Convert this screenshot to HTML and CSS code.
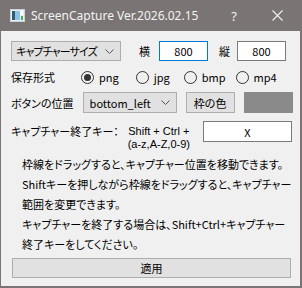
FILE: index.html
```html
<html lang="ja">
  <head>
    <meta charset="UTF-8" />
    <title>ScreenCapture</title>
    <link rel="stylesheet" href="styles.css">
  </head>
  <body>
    <div class="window">
      <div class="titlebar">
        <svg class="app-icon" width="15" height="13" viewBox="0 0 15 13">
          <rect x="0.5" y="0.5" width="14" height="12" fill="#e9f1f6" stroke="#c8d4dc" />
          <rect x="2" y="2" width="3" height="9" fill="#2f5e6e" />
          <rect x="5" y="2" width="5" height="9" fill="#8fc3e6" />
          <rect x="10" y="2" width="3" height="4" fill="#ffffff" />
          <rect x="11" y="7" width="2" height="4" fill="#4caf50" />
        </svg>
        <span class="title">ScreenCapture Ver.2026.02.15</span>
        <span class="help">?</span>
        <svg class="close" width="11" height="11" viewBox="0 0 11 11">
          <path d="M0.5 0.5 L10.5 10.5 M10.5 0.5 L0.5 10.5" stroke="#f2f2f2" stroke-width="1.1" />
        </svg>
      </div>

      <div class="content">
        <div class="row row-size">
          <div class="combo combo-size">
            <span class="combo-text">キャプチャーサイズ</span>
            <svg width="9" height="5" viewBox="0 0 9 5"><path d="M0.5 0.5 L4.5 4.5 L8.5 0.5" fill="none" stroke="#555" /></svg>
          </div>
          <span class="label label-w">横</span>
          <div class="field field-focus">800</div>
          <span class="label label-h">縦</span>
          <div class="field">800</div>
        </div>

        <div class="row row-format">
          <span class="label">保存形式</span>
          <label class="radio radio-png"><span class="dot checked"></span>png</label>
          <label class="radio radio-jpg"><span class="dot"></span>jpg</label>
          <label class="radio radio-bmp"><span class="dot"></span>bmp</label>
          <label class="radio radio-mp4"><span class="dot"></span>mp4</label>
        </div>

        <div class="row row-pos">
          <span class="label">ボタンの位置</span>
          <div class="combo combo-pos">
            <span>bottom_left</span>
            <svg width="9" height="5" viewBox="0 0 9 5"><path d="M0.5 0.5 L4.5 4.5 L8.5 0.5" fill="none" stroke="#555" /></svg>
          </div>
          <div class="btn btn-color">枠の色</div>
          <div class="swatch"></div>
        </div>

        <div class="row row-key">
          <span class="label">キャプチャー終了キー：</span>
          <div class="key-hint">
            <div>Shift + Ctrl +</div>
            <div>(a-z,A-Z,0-9)</div>
          </div>
          <div class="field field-key">X</div>
        </div>

        <div class="help-text">
          <div class="line">枠線をドラッグすると、キャプチャー位置を移動できます。</div>
          <div class="line">Shiftキーを押しながら枠線をドラッグすると、キャプチャー</div>
          <div class="line">範囲を変更できます。</div>
          <div class="line">キャプチャーを終了する場合は、Shift+Ctrl+キャプチャー</div>
          <div class="line">終了キーをしてください。</div>
        </div>

        <div class="btn btn-apply">適用</div>
      </div>
    </div>
  </body>
</html>
```

FILE: styles.css
```css
body {
  margin: 0;
  background-color: #7a7574;
}

.window {
  background-color: #7a7574;
  box-sizing: border-box;
  height: 288px;
  overflow: hidden;
  padding: 0 2px 2px 1px;
  width: 302px;
}

.titlebar {
  align-items: center;
  color: #f2f2f2;
  display: flex;
  font-family: "Noto Sans", sans-serif;
  font-size: 12px;
  height: 31px;
  white-space: nowrap;
}

.app-icon {
  flex-shrink: 0;
  margin-left: 9px;
  margin-top: -1px;
}

.title {
  flex: 1;
  margin-left: 6px;
}

.help {
  font-size: 13px;
  margin-right: 35px;
}

.close {
  flex-shrink: 0;
  margin-right: 17px;
}

.content {
  background-color: #f0f0f0;
  box-sizing: border-box;
  color: #000;
  font-family: "Noto Sans CJK JP", sans-serif;
  font-feature-settings: "palt";
  font-size: 11px;
  height: 255px;
  overflow: hidden;
  padding: 10px 0 0 10px;
  white-space: nowrap;
}

.row {
  align-items: center;
  display: flex;
}

.row > * {
  flex-shrink: 0;
}

.row-size {
  height: 20px;
}

.row-format {
  height: 20px;
  margin-top: 6px;
}

.row-pos {
  height: 21px;
  margin-top: 5px;
}

.row-key {
  align-items: flex-start;
  height: 27px;
  margin-top: 8px;
}

.combo {
  align-items: center;
  background-color: #e1e1e1;
  border: 1px solid #adadad;
  box-sizing: border-box;
  display: flex;
  height: 100%;
  justify-content: space-between;
  padding: 0 6px 0 4px;
}

.combo-size {
  width: 110px;
}

.combo-text {
  letter-spacing: -0.9px;
}

.combo-pos {
  margin-left: 9px;
  padding-left: 6px;
  width: 94px;
}

.label-w {
  margin-left: 18px;
}

.label-h {
  margin-left: 11px;
}

.field {
  align-items: center;
  background-color: #fff;
  border: 1px solid #7a7a7a;
  box-sizing: border-box;
  display: flex;
  height: 20px;
  justify-content: center;
  margin-left: 7px;
  width: 49px;
}

.field-focus {
  border-color: #0078d7;
  margin-left: 9px;
}

.radio {
  align-items: center;
  display: flex;
}

.dot {
  border: 1px solid #333;
  border-radius: 50%;
  box-sizing: border-box;
  display: inline-block;
  height: 13px;
  margin-right: 5px;
  position: relative;
  width: 13px;
}

.dot.checked::after {
  background-color: #333;
  border-radius: 50%;
  content: "";
  height: 7px;
  left: 2px;
  position: absolute;
  top: 2px;
  width: 7px;
}

.radio-png {
  margin-left: 26px;
}

.radio-jpg {
  margin-left: 17px;
}

.radio-bmp {
  margin-left: 14px;
}

.radio-mp4 {
  margin-left: 10px;
}

.btn {
  align-items: center;
  background-color: #e1e1e1;
  border: 1px solid #adadad;
  box-sizing: border-box;
  display: flex;
  justify-content: center;
}

.btn-color {
  height: 21px;
  margin-left: 9px;
  width: 49px;
}

.swatch {
  background-color: #8a8a8a;
  height: 21px;
  margin-left: 9px;
  width: 49px;
}

.row-key .label {
  line-height: 21px;
}

.key-hint {
  font-family: "Liberation Sans", sans-serif;
  line-height: 12.5px;
  margin-top: 4px;
  text-align: center;
  width: 80px;
}

.field-key {
  height: 21px;
  margin-left: 4px;
  width: 89px;
}

.help-text {
  margin: 6px 0 0 11px;
}

.line {
  height: 20px;
  line-height: 20px;
}

.btn-apply {
  height: 20px;
  margin-left: 1px;
  margin-top: 4px;
  width: 279px;
}
```
